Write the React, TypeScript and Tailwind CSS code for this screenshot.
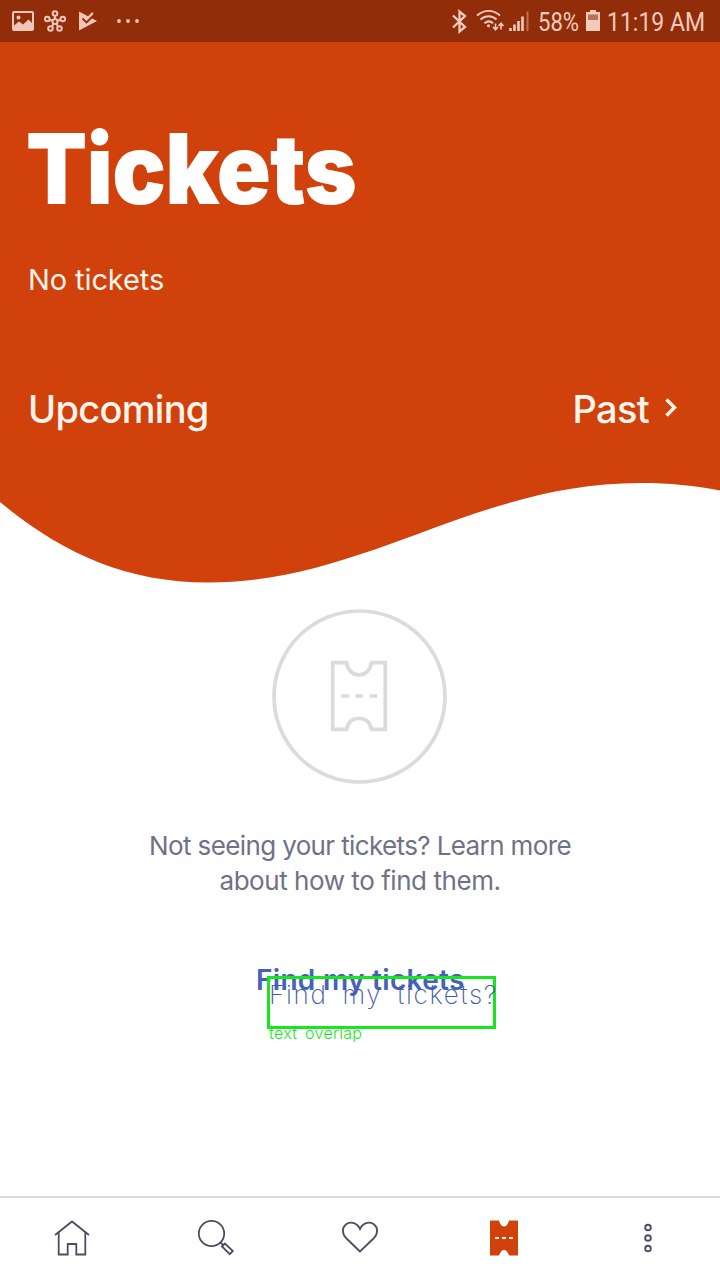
import React from "react";

function StatusBar() {
  return (
    <div className="flex h-[42px] items-center bg-[#922d0a] font-[Roboto,sans-serif] text-[26px] leading-[42px] text-[#f3cbbd]">
      <svg className="ml-3 h-[42px] w-[132px]" viewBox="12 0 132 42" fill="none">
        <path
          fill="#f0c6b8"
          fillRule="evenodd"
          d="M14 11h18a2 2 0 0 1 2 2v16a2 2 0 0 1-2 2H14a2 2 0 0 1-2-2V13a2 2 0 0 1 2-2zM14 13v12.500l5-4 4 3 5.500-5 3.500 3.500V13zM18.500 15.500a2 2 0 1 1 0 4a2 2 0 1 1 0-4z"
        />
        <g stroke="#f0c6b8" strokeWidth="2">
          <circle cx="55" cy="21.500" r="2.500" />
          <circle cx="55" cy="13.500" r="2.300" />
          <circle cx="47.300" cy="19" r="2.300" />
          <circle cx="62.800" cy="19" r="2.300" />
          <circle cx="50.500" cy="28.500" r="2.300" />
          <circle cx="59.500" cy="28.500" r="2.300" />
          <path d="M55 16v3M49.500 19.700l3 1M60.500 19.700l-3 1M52 26.500l1.500-2.500M58 26.500l-1.500-2.500" />
        </g>
        <path fill="#f0c6b8" d="M79 11.500l18 9.500L79 30.500z" />
        <path stroke="#f0c6b8" strokeWidth="2.600" d="M84.500 18l2 2L93 13" />
        <path stroke="#922d0a" strokeWidth="1.800" d="M82.500 18.500l4 4L95 14" />
        <g fill="#f3cbbd">
          <circle cx="119" cy="21" r="1.900" />
          <circle cx="128" cy="21" r="1.900" />
          <circle cx="137" cy="21" r="1.900" />
        </g>
      </svg>
      <svg className="ml-auto h-[42px] w-[80px]" viewBox="450 0 80 42" fill="none" stroke="#f3cbbd">
        <path strokeWidth="2.300" d="M453 15.500l12 11.500-5.500 4.500v-20l5.500 4.500-12 11.500" />
        <g strokeWidth="2.100">
          <path d="M477 15.500c7.500-6 16-6 23 0M480.500 19.500c5-4.300 11.500-4.300 16 0M484.500 23.300c3-2.500 6-2.500 8.500 0" />
        </g>
        <circle cx="488.500" cy="25.800" r="1.500" fill="#f3cbbd" stroke="none" />
        <path strokeWidth="1.600" d="M495.500 23.500v6M493 27l2.500 2.700 2.500-2.700M501 29.500v-6M498.500 26l2.500-2.700 2.500 2.700" />
        <path strokeWidth="2.600" d="M510.500 31v-3M514.500 31v-6.500M518.500 31v-10M522.500 31V16.500" />
        <path stroke="#b97058" strokeWidth="2" d="M527.500 31V11.500" />
      </svg>
      <div className="ml-2 w-[42px] pt-0.5">
        <span className="inline-block origin-left scale-x-[0.85]">58%</span>
      </div>
      <svg className="ml-[6px] h-[42px] w-[14px]" viewBox="586 0 14 42">
        <path fill="#f3cbbd" d="M590 10h6v2h4v19h-14V12h4z" />
        <path fill="#b97058" d="M588 14.500h10V20h-10z" />
      </svg>
      <div className="ml-[7px] w-[113px] pt-0.5">
        <span className="inline-block origin-left scale-x-[0.885] whitespace-nowrap">11:19 AM</span>
      </div>
    </div>
  );
}

function Header() {
  return (
    <header className="text-[#fff5ea]">
      <div className="h-[438px] bg-[#d1410c] px-7 pt-[77px]">
        <h1 className="-ml-0.5 origin-left scale-x-[0.92] text-[97px] leading-[100px] font-black tracking-[-0.800px] whitespace-nowrap text-white">
          Tickets
        </h1>
        <p className="mt-[41px] text-[29px] leading-10 tracking-[-0.100px]">No tickets</p>
        <div className="mt-[89px] flex h-10 items-center text-[38px] leading-10 font-medium tracking-[-0.700px]">
          <span>Upcoming</span>
          <span className="ml-auto">Past</span>
          <svg className="mr-[14px] ml-[15px] h-10 w-[14px]" viewBox="0 0 14 40" fill="none">
            <path stroke="#fff5ea" strokeWidth="3.400" d="M2.500 10.500l8 8-8 8" />
          </svg>
        </div>
      </div>
      <svg className="block h-32 w-full" viewBox="0 480 720 128">
        <path
          fill="#d1410c"
          d="M0 479V502C60 552 125 582.500 208 582.500C365 582.500 475 483 640 483C670 483 695 485.500 720 490.500V479z"
        />
      </svg>
    </header>
  );
}

function EmptyState() {
  return (
    <main className="flex flex-col items-center">
      <svg className="h-44 w-44" viewBox="272 608 176 176" fill="none" stroke="#dadae0" strokeWidth="3.700">
        <circle cx="359.500" cy="696.500" r="85.500" />
        <path d="M332.700 662.700H346.500C348 671 353 675 359 675S370 671 371.500 662.700H385.300V729.300H371.500C370 722 365 718.500 359 718.500S348 722 346.500 729.300H332.700z" />
        <path d="M341.500 696h7.500M355.500 696h7.500M369.500 696h7.500" />
      </svg>
      <p className="mt-11 text-center text-[26px] leading-[35px] tracking-[-0.620px] whitespace-nowrap text-[#6f7287]">
        Not seeing your tickets? Learn more
        <br />
        <span className="tracking-[-0.450px]">about how to find them.</span>
      </p>
      <div className="relative mt-[62px] h-10 w-[208px]">
        <a className="text-[28px] leading-10 font-semibold tracking-[0.300px] whitespace-nowrap text-[#4661b8]">Find my tickets</a>
        <div className="absolute top-4 left-[11px] h-[53px] w-[229px] border-3 border-[#14e81c]">
          <span className="-mt-1 -ml-px block text-[26px] leading-10 font-extralight tracking-[1.700px] whitespace-nowrap text-[#3e5cad] [word-spacing:6px]">
            Find my tickets?
          </span>
        </div>
        <span className="absolute top-[63px] left-[13px] text-[16px] leading-5 font-light tracking-[0.300px] whitespace-nowrap text-[#14e81c] [word-spacing:3px]">
          text overlap
        </span>
      </div>
    </main>
  );
}

function TabBar() {
  return (
    <nav className="mt-auto grid h-[84px] grid-cols-5 border-t-2 border-[#d9dadb] text-[#4b4d63]">
      <svg className="h-[82px] w-full" viewBox="0 1198 144 82" fill="none" stroke="currentColor" strokeWidth="1.800">
        <path d="M55 1235l17-13.500 17 13.500M58.700 1232.500v22h9V1244h8.600v10.500h9v-22" />
      </svg>
      <svg className="h-[82px] w-full" viewBox="144 1198 144 82" fill="none" stroke="currentColor" strokeWidth="1.800">
        <circle cx="211.500" cy="1233.500" r="12.700" />
        <path d="M220.500 1242.500l3 3M222 1246.500l3-3 7.800 7.500-3 3.200z" />
      </svg>
      <svg className="h-[82px] w-full" viewBox="288 1198 144 82" fill="none" stroke="currentColor" strokeWidth="1.800">
        <path d="M360 1251.500L346 1238C341.500 1233 342 1227 346.500 1224C351 1221.500 357 1222.500 360 1229C363 1222.500 369 1221.500 373.500 1224C378 1227 378.500 1233 374 1238z" />
      </svg>
      <svg className="h-[82px] w-full" viewBox="432 1198 144 82">
        <path fill="#d1410c" d="M490 1220.500H499C500 1224.500 502 1226.500 504 1226.500S508 1224.500 509 1220.500H518V1255.500H509C508 1252 506 1250 504 1250S500 1252 499 1255.500H490z" />
        <path stroke="#fff0e3" strokeWidth="1.800" d="M495 1238h4M502 1238h4M509 1238h4" />
      </svg>
      <svg className="h-[82px] w-full" viewBox="576 1198 144 82" fill="none" stroke="currentColor" strokeWidth="1.900">
        <circle cx="648" cy="1227.500" r="2.800" />
        <circle cx="648" cy="1238" r="2.800" />
        <circle cx="648" cy="1248.500" r="2.800" />
      </svg>
    </nav>
  );
}

export default function App() {
  return (
    <div className="flex h-[1280px] w-[720px] flex-col overflow-hidden bg-white font-[Inter,sans-serif]">
      <StatusBar />
      <Header />
      <EmptyState />
      <TabBar />
    </div>
  );
}
